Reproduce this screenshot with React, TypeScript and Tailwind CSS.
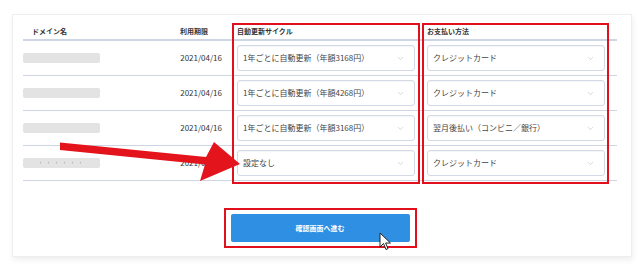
import { ChevronDown } from "lucide-react";

const rows = [
  { date: "2021/04/16", cycle: "1年ごとに自動更新（年額3168円）", pay: "クレジットカード", dots: false },
  { date: "2021/04/16", cycle: "1年ごとに自動更新（年額4268円）", pay: "クレジットカード", dots: false },
  { date: "2021/04/16", cycle: "1年ごとに自動更新（年額3168円）", pay: "翌月後払い（コンビニ／銀行）", dots: false },
  { date: "2021/04/16", cycle: "設定なし", pay: "クレジットカード", dots: true },
];

function SelectBox({ value }: { value: string }) {
  return (
    <div className="flex h-[26px] w-[178px] items-center justify-between rounded-[3px] border border-[#d3dae6] bg-white pl-[5px] pr-[9px] text-[8px] text-[#444] shadow-[inset_0_1px_1px_rgba(0,0,0,0.04)]">
      <span>{value}</span>
      <ChevronDown className="h-[9px] w-[9px] text-[#bbb]" strokeWidth={1.5} />
    </div>
  );
}

function App() {
  return (
    <div
      className="relative h-[268px] w-[643px] overflow-hidden bg-white pl-[12px] pt-[14px]"
      style={{ fontFamily: '"Noto Sans CJK JP", "Noto Sans", sans-serif' }}
    >
      <div className="h-[243px] w-[620px] border border-[#eeeeee] bg-white pl-[10px] pr-[14px] pt-[8px] shadow-[1px_3px_6px_rgba(0,0,0,0.07)]">
        <div className="relative w-[594px]">
          <div className="flex h-[18px] items-center border-b-2 border-[#cdd5e3] text-[7px] font-bold text-[#333]">
            <div className="w-[157px] pl-[9px]">ドメイン名</div>
            <div className="w-[57px]">利用期限</div>
            <div className="w-[190px]">自動更新サイクル</div>
            <div>お支払い方法</div>
          </div>

          {rows.map((row, i) => (
            <div key={i} className="flex h-[35px] items-center border-b border-[#cdd5e3]">
              <div className="w-[120px]">
                <div className="flex h-[10px] w-[77px] items-center justify-center rounded-[2px] bg-[#e3e3e3] blur-[0.6px]">
                  {row.dots ? <span className="text-[6px] leading-none tracking-[2px] text-[#aaa]">・・・・・・</span> : null}
                </div>
              </div>
              <div className="w-[79px] text-right text-[8px] text-[#333]">{row.date}</div>
              <div className="ml-[15px]">
                <SelectBox value={row.cycle} />
              </div>
              <div className="ml-[12px]">
                <SelectBox value={row.pay} />
              </div>
            </div>
          ))}

          <div className="absolute left-[209px] top-0 h-[161px] w-[188px] border-2 border-[#e0101c]" />
          <div className="absolute left-[399px] top-0 h-[161px] w-[187px] border-2 border-[#e0101c]" />
        </div>

        <div className="mt-[27px] flex justify-center">
          <div className="border-2 border-[#e0101c] px-[5px] py-[4px]">
            <button
              type="button"
              className="flex h-[28px] w-[179px] items-center justify-center rounded-[2px] bg-[#2f8fe3] text-[7px] font-bold text-white"
            >
              確認画面へ進む
            </button>
          </div>
        </div>
      </div>

      <svg className="pointer-events-none absolute left-0 top-0" width="643" height="268">
        <polygon
          points="60,142.5 206,157 214,142 240,164 200,181 205,164.5 60,150"
          fill="#e3141c"
        />
      </svg>

      <svg className="pointer-events-none absolute left-[379px] top-[232px]" width="14" height="20" viewBox="0 0 14 20">
        <path d="M1 1 L1 15 L4.5 11.5 L7 17.5 L9 16.6 L6.6 11 L11.5 11 Z" fill="#fff" stroke="#222" strokeWidth="1" strokeLinejoin="round" />
      </svg>
    </div>
  );
}

export default App;
